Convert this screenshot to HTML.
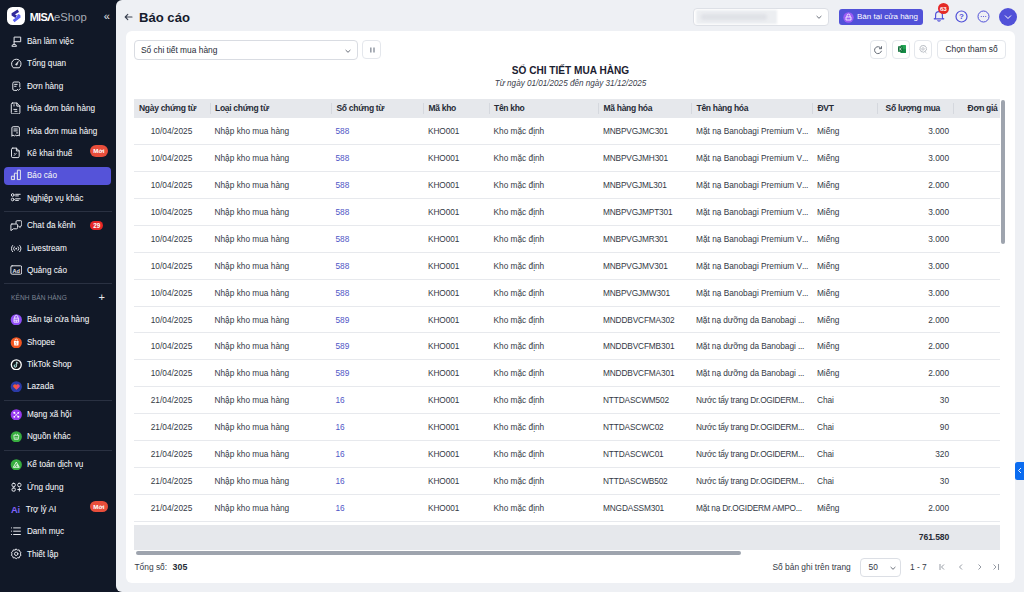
<!DOCTYPE html>
<html><head><meta charset="utf-8">
<style>
*{margin:0;padding:0;box-sizing:border-box}
html,body{width:1024px;height:592px;overflow:hidden;background:#111827;font-family:"Liberation Sans",sans-serif}
#side{position:absolute;left:0;top:0;width:116px;height:592px;background:#111827}
.logo{position:absolute;left:7.3px;top:7.1px;width:18.2px;height:18.4px;border-radius:5.5px;background:#fff}
.brand{position:absolute;left:29.8px;top:11px;font-size:11.3px;line-height:13px;color:#fff;white-space:nowrap}
.brand b{font-weight:bold;letter-spacing:-0.75px;font-size:10.9px}
.brand span{color:#a6abb5;margin-left:0.6px}
.collapse{position:absolute;left:103.8px;top:10px;color:#e6e8ee;font-size:11px}
.si{position:absolute;left:4.3px;width:107.1px;height:18px;border-radius:4px;color:#f3f4f7;font-size:8.2px;line-height:18px;-webkit-text-stroke:0.05px #f3f4f7;white-space:nowrap}
.si.act{background:#5553d9}
.si .ic{position:absolute;left:6px;top:2.6px;width:12px;height:12px}
.si .ic svg{display:block}
.si .lb{position:absolute;left:22.6px;top:0.5px}
.badge{position:absolute;left:85.5px;border-radius:6px;color:#fff;font-weight:bold;text-align:center}
.sep{position:absolute;left:4px;width:108px;height:1px;background:#2a3142}
.kenh{position:absolute;left:11px;top:294px;font-size:6.6px;color:#7d8494;letter-spacing:.1px}
.plus{position:absolute;left:98.5px;top:290.5px;font-size:11px;color:#e6e8ee}
#main{position:absolute;left:116px;top:0;width:908px;height:592px;background:#eef0f4;border-radius:6px 0 0 6px}
.title{position:absolute;left:139px;top:10px;font-size:13.1px;font-weight:bold;color:#151b2c}
.back{position:absolute;left:124px;top:13px}
.store{position:absolute;left:692.8px;top:7.5px;width:136.6px;height:18.5px;border:1px solid #dcdfe5;border-radius:4px;background:#fff}
.store .blur{position:absolute;left:2.5px;top:1.5px;width:81px;height:14px;background:#eceef1;filter:blur(0.8px)}
.store .blur2{position:absolute;left:7px;top:5.5px;width:66px;height:6px;border-radius:3px;background:#dfe1e6;filter:blur(1.6px)}
.btn-store{position:absolute;left:839px;top:9px;width:84px;height:16px;border-radius:3px;background:#5151d8;color:#fff;font-size:8px;line-height:15px}
#card{position:absolute;left:126px;top:31px;width:889px;height:552px;background:#fff;border-radius:6px}
.sel{position:absolute;left:134px;top:40px;width:224px;height:19.5px;border:1px solid #d9dce2;border-radius:4px;background:#fff;font-size:8.4px;line-height:19px;padding-left:6px;color:#262b36}
.ibtn{position:absolute;top:40px;height:18.5px;border:1px solid #e4e7ec;border-radius:4px;background:#fff}
.rtitle{position:absolute;left:0;width:1024px;text-align:center}
.thead{position:absolute;left:134px;top:99px;width:866px;height:18.7px;background:#e6e8ec}
.hsep{position:absolute;top:103px;width:1px;height:11px;background:#d5d8de}
.ht{position:absolute;top:102.6px;font-size:8.5px;letter-spacing:-0.3px;font-weight:bold;color:#262b36;white-space:nowrap}
.r{text-align:right}
.td{position:absolute;font-size:8.3px;line-height:12px;color:#343a46;white-space:nowrap}
.td.c{text-align:center}
.td.lk{color:#4f56c6}
.rl{position:absolute;left:134px;width:866px;height:1px;background:#e7e9ed}
.total{position:absolute;left:134px;top:525px;width:866px;height:24.6px;background:#e6e8ec}
.hscroll{position:absolute;left:135.5px;top:551px;width:605px;height:3.8px;border-radius:2px;background:#9ea4ae}
.vscroll{position:absolute;left:1000.8px;top:100px;width:4px;height:144px;border-radius:2px;background:#9ea4ae}
</style></head><body>
<div id="side">
<div class="logo"><svg width="18" height="18" viewBox="0 0 18 18"><path d="M11.3 3.8L5.3 7.4 9.2 9.8" stroke="#30299a" stroke-width="2.8" fill="none" stroke-linejoin="bevel"/><path d="M10.4 8.2L12.7 9.3 6.6 14.1" stroke="#5a60f3" stroke-width="2.8" fill="none" stroke-linejoin="bevel"/></svg></div>
<div class="brand"><b>MIS&#923;</b><span>eShop</span></div>
<div class="collapse">«</div>
<div class="si" style="top:32.5px"><span class="ic"><svg width="12" height="12" viewBox="0 0 12 12"><path d="M4.1 9.6V2.1h6.6v4.6H4.1" stroke="#e4e6ec" stroke-width="1" fill="none" stroke-linecap="round" stroke-linejoin="round"/><path d="M1.9 10.9a2.3 1.5 0 014.6 0z" stroke="#e4e6ec" stroke-width="1" fill="none" stroke-linecap="round" stroke-linejoin="round"/></svg></span><span class="lb">Bàn làm việc</span></div><div class="si" style="top:54.8px"><span class="ic"><svg width="12" height="12" viewBox="0 0 12 12"><path d="M3 10.5A4.8 4.8 0 119.6 10.5z" stroke="#e4e6ec" stroke-width="1" fill="none" stroke-linecap="round" stroke-linejoin="round"/><path d="M5.3 7.6L8.4 4.3 7 8.3z" fill="#e4e6ec" stroke="#e4e6ec" stroke-width=".5" stroke-linejoin="round"/></svg></span><span class="lb">Tổng quan</span></div><div class="si" style="top:77.4px"><span class="ic"><svg width="12" height="12" viewBox="0 0 12 12"><path d="M6.6 10.4H4.2a1.4 1.4 0 01-1.4-1.4V3.4A1.4 1.4 0 014.2 2h4.2a1.4 1.4 0 011.4 1.4V7" stroke="#e4e6ec" stroke-width="1" fill="none" stroke-linecap="round" stroke-linejoin="round"/><path d="M4.6 4.4h2.6M4.6 6.3h1.5M7.4 9.4l1 1 2-2" stroke="#e4e6ec" stroke-width="1" fill="none" stroke-linecap="round" stroke-linejoin="round"/></svg></span><span class="lb">Đơn hàng</span></div><div class="si" style="top:99.9px"><span class="ic"><svg width="12" height="12" viewBox="0 0 12 12"><path d="M2.6 1h4.2l3.1 3.1v6.5a1.3 1.3 0 01-1.3 1.3H2.6a1.3 1.3 0 01-1.3-1.3V2.3A1.3 1.3 0 012.6 1z" stroke="#e4e6ec" stroke-width="1" fill="none" stroke-linecap="round" stroke-linejoin="round"/><path d="M6.8 1v3.1h3.1M4 2.7v1.3M3.8 7.4h3M4.8 9.3h2.2" stroke="#e4e6ec" stroke-width="1" fill="none" stroke-linecap="round" stroke-linejoin="round"/></svg></span><span class="lb">Hóa đơn bán hàng</span></div><div class="si" style="top:122.2px"><span class="ic"><svg width="12" height="12" viewBox="0 0 12 12"><path d="M1.9 10.9V3a1.3 1.3 0 011.3-1.3h4.9A1.3 1.3 0 019.4 3v7.9l-1.25-.7-1.25.7-1.25-.7-1.25.7-1.25-.7z" stroke="#e4e6ec" stroke-width="1" fill="none" stroke-linecap="round" stroke-linejoin="round"/><path d="M3.9 4h3.4M3.9 5.9h3.4M6.6 7.9h.9" stroke="#e4e6ec" stroke-width="1" fill="none" stroke-linecap="round" stroke-linejoin="round"/></svg></span><span class="lb">Hóa đơn mua hàng</span></div><div class="si" style="top:144.5px"><span class="ic"><svg width="12" height="12" viewBox="0 0 12 12"><path d="M2.8 1.1h3.6l2.8 2.8v5.4a1.3 1.3 0 01-1.3 1.3H2.8a1.3 1.3 0 01-1.3-1.3V2.4a1.3 1.3 0 011.3-1.3z" stroke="#e4e6ec" stroke-width="1" fill="none" stroke-linecap="round" stroke-linejoin="round"/><path d="M6.4 1.1v2.8h2.8" stroke="#e4e6ec" stroke-width="1" fill="none" stroke-linecap="round" stroke-linejoin="round"/><path d="M4 8.6l2.4-2.4M4.3 6.4l.5.5" stroke="#e4e6ec" stroke-width=".8" stroke-linecap="round"/></svg></span><span class="lb">Kê khai thuế</span><span class="badge" style="top:0.9px;width:18.3px;height:11.2px;line-height:11.2px;background:#e94e3b;font-size:6.2px">Mới</span></div><div class="si act" style="top:166.9px"><span class="ic"><svg width="12" height="12" viewBox="0 0 12 12"><path d="M1.4 10.2V7.2h3v3zM4.4 10.2V4.2h3v6M7.4 10.2V1.2h3v9z" stroke="#e4e6ec" stroke-width="1" fill="none" stroke-linecap="round" stroke-linejoin="round"/></svg></span><span class="lb">Báo cáo</span></div><div class="si" style="top:189.1px"><span class="ic"><svg width="12" height="12" viewBox="0 0 12 12"><circle cx="2.7" cy="3" r="1.35" stroke="#e4e6ec" stroke-width="1" fill="none" stroke-linecap="round" stroke-linejoin="round"/><circle cx="2.7" cy="7.5" r="1.35" stroke="#e4e6ec" stroke-width="1" fill="none" stroke-linecap="round" stroke-linejoin="round"/><path d="M5.6 2.3h4.6M5.6 3.9h2.8M5.6 6.8h4.6M5.6 8.4h2.8" stroke="#e4e6ec" stroke-width="1" fill="none" stroke-linecap="round" stroke-linejoin="round"/></svg></span><span class="lb">Nghiệp vụ khác</span></div><div class="si" style="top:216.3px"><span class="ic"><svg width="12" height="12" viewBox="0 0 12 12"><path d="M6 4.3V2.8a1.1 1.1 0 011.1-1.1h3.6a1.1 1.1 0 011.1 1.1v3.3a1.1 1.1 0 01-1.1 1.1h-.5v1.3L8.6 7.2" stroke="#e4e6ec" stroke-width="1" fill="none" stroke-linecap="round" stroke-linejoin="round"/><path d="M1.9 5h4.6A1.1 1.1 0 017.6 6.1v2.6a1.1 1.1 0 01-1.1 1.1H3.4L.9 11.6V6A1 1 0 011.9 5z" stroke="#e4e6ec" stroke-width="1" fill="none" stroke-linecap="round" stroke-linejoin="round"/></svg></span><span class="lb">Chat đa kênh</span><span class="badge" style="top:4.3px;width:13.7px;height:9.5px;line-height:9.5px;background:#e62626;font-size:6.3px">29</span></div><div class="si" style="top:239.1px"><span class="ic"><svg width="12" height="12" viewBox="0 0 12 12"><circle cx="6.2" cy="6.6" r=".9" fill="#e4e6ec"/><path d="M4.3 4.8a2.6 2.6 0 000 3.6M8.1 4.8a2.6 2.6 0 010 3.6M2.6 3.5a4.5 4.5 0 000 6.2M9.8 3.5a4.5 4.5 0 010 6.2" stroke="#e4e6ec" stroke-width="1" fill="none" stroke-linecap="round" stroke-linejoin="round"/></svg></span><span class="lb">Livestream</span></div><div class="si" style="top:261.2px"><span class="ic"><svg width="12" height="12" viewBox="0 0 12 12"><rect x=".9" y="1.8" width="10.8" height="8.4" rx="1.2" stroke="#e4e6ec" stroke-width="1" fill="none" stroke-linecap="round" stroke-linejoin="round"/><text x="6.3" y="8.6" font-size="5.6" font-weight="bold" fill="#e4e6ec" text-anchor="middle" font-family="Liberation Sans">Ad</text></svg></span><span class="lb">Quảng cáo</span></div><div class="si" style="top:310.4px"><span class="ic"><svg width="12" height="12" viewBox="0 0 12 12"><circle cx="6.3" cy="6.8" r="5.6" fill="#8f4ef5"/><path d="M4 5.2h4.6v4H4zM4.7 5.2V4a1.6 1.6 0 013.2 0v1.2M4 7.2h4.6M6.3 7.2v2" stroke="#fff" stroke-width=".75" fill="none"/></svg></span><span class="lb">Bán tại cửa hàng</span></div><div class="si" style="top:333.2px"><span class="ic"><svg width="12" height="12" viewBox="0 0 12 12"><circle cx="6.3" cy="6.8" r="5.6" fill="#f2541f"/><path d="M3.9 4.9h4.8l-.3 4.6H4.2z" fill="#fff"/><path d="M5 4.9V4.3a1.3 1.3 0 012.6 0v.6" stroke="#fff" stroke-width=".7" fill="none"/><path d="M6.9 6.2a.8.6 0 00-1.3.4c0 .8 1.4.5 1.4 1.3a.8.6 0 01-1.4.3" stroke="#f2541f" stroke-width=".5" fill="none"/></svg></span><span class="lb">Shopee</span></div><div class="si" style="top:355.4px"><span class="ic"><svg width="12" height="12" viewBox="0 0 12 12"><circle cx="6.3" cy="6.8" r="5.6" fill="#fff"/><circle cx="6.3" cy="6.8" r="4.3" fill="#15171c"/><path d="M6.6 3.9v4.1a1.2 1.2 0 11-1.1-1.2M6.6 3.9c.2.8.8 1.3 1.6 1.4" stroke="#fff" stroke-width=".8" fill="none"/><path d="M6.2 3.7v4.1a1.2 1.2 0 11-1.1-1.2" stroke="#25f4ee" stroke-width=".4" fill="none" opacity=".7"/></svg></span><span class="lb">TikTok Shop</span></div><div class="si" style="top:377.6px"><span class="ic"><svg width="12" height="12" viewBox="0 0 12 12"><circle cx="6.3" cy="6.8" r="5.6" fill="#2b3aa6"/><path d="M6.3 9.8L3.4 7.1a1.6 1.6 0 012.9-2 1.6 1.6 0 012.9 2z" fill="#f25a3c"/><path d="M6.3 9.8L9.2 7.1a1.6 1.6 0 00-1.4-2.6" fill="#e83e8c"/></svg></span><span class="lb">Lazada</span></div><div class="si" style="top:405.4px"><span class="ic"><svg width="12" height="12" viewBox="0 0 12 12"><circle cx="6.3" cy="6.8" r="5.6" fill="#9739f0"/><path d="M4.3 4.8l4 4M8.3 4.8l-4 4" stroke="#fff" stroke-width=".6"/><circle cx="4.3" cy="4.8" r="1.05" fill="#fff"/><circle cx="8.3" cy="4.8" r=".9" fill="#fff"/><circle cx="4.3" cy="8.8" r=".9" fill="#fff"/><circle cx="8.3" cy="8.8" r="1.05" fill="#fff"/></svg></span><span class="lb">Mạng xã hội</span></div><div class="si" style="top:427.7px"><span class="ic"><svg width="12" height="12" viewBox="0 0 12 12"><circle cx="6.3" cy="6.8" r="5.6" fill="#37ad3f"/><path d="M3.8 5.3h5l-.5 4H4.3z" fill="none" stroke="#fff" stroke-width=".7"/><circle cx="5.2" cy="4.3" r=".5" fill="#fff"/><circle cx="7.4" cy="4.3" r=".5" fill="#fff"/><path d="M5.3 7.3v1.2M6.3 7.3v1.2M7.3 7.3v1.2" stroke="#fff" stroke-width=".5"/></svg></span><span class="lb">Nguồn khác</span></div><div class="si" style="top:455.4px"><span class="ic"><svg width="12" height="12" viewBox="0 0 12 12"><circle cx="6.3" cy="6.8" r="5.6" fill="#37ad3f"/><path d="M3.3 9.3L6.3 4l3 5.3zM4.6 9.3l2.6-2.9 1 2.9" fill="none" stroke="#fff" stroke-width=".8" stroke-linejoin="round"/></svg></span><span class="lb">Kế toán dịch vụ</span></div><div class="si" style="top:478.1px"><span class="ic"><svg width="12" height="12" viewBox="0 0 12 12"><rect x="2" y="2.3" width="3.3" height="3.3" rx="1.3" stroke="#e4e6ec" stroke-width="1" fill="none" stroke-linecap="round" stroke-linejoin="round"/><rect x="7.7" y="2.3" width="3.3" height="3.3" rx="1.3" stroke="#e4e6ec" stroke-width="1" fill="none" stroke-linecap="round" stroke-linejoin="round"/><rect x="2" y="6.9" width="3.3" height="3.3" rx="1.3" stroke="#e4e6ec" stroke-width="1" fill="none" stroke-linecap="round" stroke-linejoin="round"/><path d="M9.35 6.9v3.2M7.75 8.5h3.2" stroke="#e4e6ec" stroke-width="1" fill="none" stroke-linecap="round" stroke-linejoin="round"/></svg></span><span class="lb">Ứng dụng</span></div><div class="si" style="top:500.1px"><span class="ic"><svg width="12" height="12" viewBox="0 0 12 12"><defs><linearGradient id="aig" x1="0" y1="0" x2="1" y2="1"><stop offset="0" stop-color="#a259ff"/><stop offset="1" stop-color="#5b6cf5"/></linearGradient></defs><text x="1" y="10" font-size="9.4" font-weight="bold" fill="url(#aig)" font-family="Liberation Sans" letter-spacing="-.2">Ai</text></svg></span><span class="lb" style="left:21.4px">Trợ lý AI</span><span class="badge" style="top:0.9px;width:18.3px;height:11.2px;line-height:11.2px;background:#e94e3b;font-size:6.2px">Mới</span></div><div class="si" style="top:522.7px"><span class="ic"><svg width="12" height="12" viewBox="0 0 12 12"><path d="M1.5 2.9h.1M1.5 6.2h.1M1.5 9.5h.1M3.6 2.9h6.8M3.6 6.2h6.8M3.6 9.5h6.8" stroke="#e4e6ec" stroke-width="1" fill="none" stroke-linecap="round" stroke-linejoin="round" stroke-width="1.1"/></svg></span><span class="lb">Danh mục</span></div><div class="si" style="top:545.0px"><span class="ic"><svg width="12" height="12" viewBox="0 0 12 12"><circle cx="6.2" cy="5.8" r="1.7" stroke="#e4e6ec" stroke-width="1" fill="none" stroke-linecap="round" stroke-linejoin="round"/><path d="M6.2 1.1l1.3 1 1.7-.2.4 1.6 1.4.9-.6 1.5.6 1.5-1.4.9-.4 1.6-1.7-.2-1.3 1-1.3-1-1.7.2-.4-1.6L1.4 7.4 2 5.9 1.4 4.4l1.4-.9.4-1.6 1.7.2z" stroke="#e4e6ec" stroke-width="1" fill="none" stroke-linecap="round" stroke-linejoin="round"/></svg></span><span class="lb">Thiết lập</span></div><div class="sep" style="top:211.0px"></div><div class="sep" style="top:282.6px"></div><div class="sep" style="top:400.0px"></div><div class="sep" style="top:450.0px"></div>
<div class="kenh">KÊNH BÁN HÀNG</div>
<div class="plus">+</div>
</div>
<div id="main"></div>
<svg class="back" width="9" height="8" viewBox="0 0 9 8"><path d="M8 4H1.2M3.8 1.4L1.2 4l2.6 2.6" stroke="#3a4050" stroke-width="1.1" fill="none" stroke-linecap="round" stroke-linejoin="round"/></svg>
<div class="title">Báo cáo</div>
<div class="store"><div class="blur"></div><div class="blur2"></div><svg style="position:absolute;left:121px;top:5.5px" width="8" height="6" viewBox="0 0 8 6"><path d="M1.6 2l2.4 2.3L6.4 2" stroke="#5a606b" stroke-width=".9" fill="none"/></svg></div>
<div class="btn-store"><svg style="position:absolute;left:4px;top:2.5px" width="11" height="11" viewBox="0 0 11 11"><circle cx="5.5" cy="5.5" r="5.2" fill="#9b5cf5"/><path d="M3 8V5h5v3zM4 5V3.6a1.5 1.5 0 013 0V5" stroke="#fff" stroke-width=".8" fill="none"/></svg><span style="position:absolute;left:18px;top:0">Bán tại cửa hàng</span></div>
<svg style="position:absolute;left:931.5px;top:8.3px" width="14" height="14" viewBox="0 0 14 14"><path d="M3.6 9.5V7a3.4 3.4 0 016.8 0v2.5c0 .6.6 1.2 1.4 1.3H2.2c.8-.1 1.4-.7 1.4-1.3z M5.8 12a1.2 1.2 0 002.4 0" stroke="#4f4fd8" stroke-width="1.15" fill="none" stroke-linejoin="round"/></svg>
<div style="position:absolute;left:937.7px;top:2.9px;width:11px;height:11px;border-radius:5.5px;background:#e42a26;color:#fff;font-size:6.2px;font-weight:bold;text-align:center;line-height:11px;letter-spacing:-.2px">63</div>
<svg style="position:absolute;left:955px;top:10px" width="13" height="13" viewBox="0 0 13 13"><circle cx="6.5" cy="6.5" r="5.5" stroke="#4f4fd8" stroke-width="1.2" fill="none"/><text x="6.5" y="9.3" font-size="8" font-weight="bold" text-anchor="middle" fill="#4f4fd8" font-family="Liberation Sans">?</text></svg>
<svg style="position:absolute;left:977px;top:10px" width="13" height="13" viewBox="0 0 13 13"><circle cx="6.5" cy="6.5" r="5.5" stroke="#4f4fd8" stroke-width="1" fill="none"/><circle cx="4.3" cy="6.5" r=".6" fill="#4f4fd8"/><circle cx="6.5" cy="6.5" r=".6" fill="#4f4fd8"/><circle cx="8.7" cy="6.5" r=".6" fill="#4f4fd8"/></svg>
<div style="position:absolute;left:999px;top:7.5px;width:18px;height:18px;border-radius:9px;background:#5151d8"><svg style="position:absolute;left:5px;top:6px" width="8" height="6" viewBox="0 0 8 6"><path d="M1 1.5l3 3 3-3" stroke="#fff" stroke-width="1" fill="none"/></svg></div>
<div style="position:absolute;left:1015px;top:462px;width:9px;height:17.5px;border-radius:2.5px 0 0 2.5px;background:#0b6cf0"><svg style="position:absolute;left:2px;top:5px" width="5" height="7" viewBox="0 0 5 7"><path d="M4 1L1.5 3.5 4 6" stroke="#fff" stroke-width=".9" fill="none"/></svg></div>
<div id="card"></div>
<div class="sel">Sổ chi tiết mua hàng<svg style="position:absolute;left:209px;top:6.5px" width="8" height="6" viewBox="0 0 8 6"><path d="M1.6 2l2.4 2.3L6.4 2" stroke="#5a606b" stroke-width=".9" fill="none"/></svg></div>
<div class="ibtn" style="left:362px;width:19px"><svg style="position:absolute;left:5.5px;top:4.5px" width="7" height="8" viewBox="0 0 7 8"><rect x="1" y="1.5" width="1.6" height="5" fill="#9aa0aa"/><rect x="4.2" y="1.5" width="1.6" height="5" fill="#9aa0aa"/></svg></div>
<div class="ibtn" style="left:869.8px;width:17.5px"><svg style="position:absolute;left:2.5px;top:3.8px" width="10" height="10" viewBox="0 0 10 10"><path d="M8.1 3.4A3.5 3.5 0 1 0 8.4 6.2" stroke="#5f6571" stroke-width=".95" fill="none" stroke-linecap="round"/><path d="M8.5 1.6v2.1H6.4" stroke="#5f6571" stroke-width=".95" fill="none" stroke-linecap="round" stroke-linejoin="round"/></svg></div>
<div class="ibtn" style="left:892px;width:17.5px"><svg style="position:absolute;left:3.5px;top:3.3px" width="10" height="10" viewBox="0 0 10 10"><rect x="3.6" y="1" width="5.4" height="7.9" rx=".5" fill="#22a454"/><rect x="3.6" y="4.9" width="5.4" height="4" fill="#158a45"/><rect x="1" y="2.3" width="4.6" height="5.4" rx=".5" fill="#0f6e37"/><path d="M2.2 3.5l2.2 3M4.4 3.5l-2.2 3" stroke="#e8f5ec" stroke-width=".7"/></svg></div>
<div class="ibtn" style="left:914px;width:17.5px"><svg style="position:absolute;left:3.2px;top:3.3px" width="10" height="10" viewBox="0 0 10 10"><path d="M5 1.1l.9.8 1.2-.1.4 1.1 1 .7-.3 1.1.4 1.1-1 .6-.3 1.2-1.2.1-.9.8-.9-.8-1.2-.1-.3-1.2-1-.6.4-1.1-.3-1.1 1-.7.4-1.1 1.2.1z" stroke="#a9aeb6" stroke-width=".8" fill="none" stroke-linejoin="round"/><rect x="3.9" y="3.9" width="2.2" height="2" rx=".4" stroke="#a9aeb6" stroke-width=".7" fill="none"/><path d="M7.6 8.4l.9.9" stroke="#a9aeb6" stroke-width=".8"/></svg></div>
<div class="ibtn" style="left:937px;width:69px;font-size:8.4px;line-height:16.5px;text-align:center;color:#262b36">Chọn tham số</div>
<div class="rtitle" style="left:126px;width:889px;top:65px;font-size:10.1px;font-weight:bold;color:#1b2130">SỔ CHI TIẾT MUA HÀNG</div>
<div class="rtitle" style="left:126px;width:889px;top:79px;font-size:8.15px;font-style:italic;color:#3a404c">Từ ngày 01/01/2025 đến ngày 31/12/2025</div>
<div class="thead"></div>
<div class="ht" style="left:139.0px">Ngày chứng từ</div><div class="hsep" style="left:209.5px"></div><div class="ht" style="left:215.0px">Loại chứng từ</div><div class="hsep" style="left:331.0px"></div><div class="ht" style="left:336.5px">Số chứng từ</div><div class="hsep" style="left:423.0px"></div><div class="ht" style="left:428.5px">Mã kho</div><div class="hsep" style="left:488.5px"></div><div class="ht" style="left:494.0px">Tên kho</div><div class="hsep" style="left:598.0px"></div><div class="ht" style="left:603.5px">Mã hàng hóa</div><div class="hsep" style="left:691.0px"></div><div class="ht" style="left:696.5px">Tên hàng hóa</div><div class="hsep" style="left:812.0px"></div><div class="ht" style="left:817.5px">ĐVT</div><div class="hsep" style="left:876.5px"></div><div class="ht r" style="right:84.0px">Số lượng mua</div><div class="hsep" style="left:952.5px"></div><div class="ht r" style="right:26.5px">Đơn giá</div>
<div class="rl" style="top:144.10px"></div><div class="td c" style="top:125.25px;left:133.5px;width:76px">10/04/2025</div><div class="td" style="top:125.25px;left:214.5px">Nhập kho mua hàng</div><div class="td lk" style="top:125.25px;left:335.5px">588</div><div class="td" style="top:125.25px;left:428px;letter-spacing:-0.1px">KHO001</div><div class="td" style="top:125.25px;left:493.5px">Kho mặc định</div><div class="td" style="top:125.25px;left:603px;letter-spacing:-0.15px">MNBPVGJMC301</div><div class="td" style="top:125.25px;left:696px;letter-spacing:0px">Mặt nạ Banobagi Premium V<span style="letter-spacing:-0.3px">...</span></div><div class="td" style="top:125.25px;left:816.9px">Miếng</div><div class="td r" style="top:125.25px;right:75.0px">3.000</div><div class="rl" style="top:171.00px"></div><div class="td c" style="top:152.15px;left:133.5px;width:76px">10/04/2025</div><div class="td" style="top:152.15px;left:214.5px">Nhập kho mua hàng</div><div class="td lk" style="top:152.15px;left:335.5px">588</div><div class="td" style="top:152.15px;left:428px;letter-spacing:-0.1px">KHO001</div><div class="td" style="top:152.15px;left:493.5px">Kho mặc định</div><div class="td" style="top:152.15px;left:603px;letter-spacing:-0.15px">MNBPVGJMH301</div><div class="td" style="top:152.15px;left:696px;letter-spacing:0px">Mặt nạ Banobagi Premium V<span style="letter-spacing:-0.3px">...</span></div><div class="td" style="top:152.15px;left:816.9px">Miếng</div><div class="td r" style="top:152.15px;right:75.0px">3.000</div><div class="rl" style="top:197.90px"></div><div class="td c" style="top:179.05px;left:133.5px;width:76px">10/04/2025</div><div class="td" style="top:179.05px;left:214.5px">Nhập kho mua hàng</div><div class="td lk" style="top:179.05px;left:335.5px">588</div><div class="td" style="top:179.05px;left:428px;letter-spacing:-0.1px">KHO001</div><div class="td" style="top:179.05px;left:493.5px">Kho mặc định</div><div class="td" style="top:179.05px;left:603px;letter-spacing:-0.15px">MNBPVGJML301</div><div class="td" style="top:179.05px;left:696px;letter-spacing:0px">Mặt nạ Banobagi Premium V<span style="letter-spacing:-0.3px">...</span></div><div class="td" style="top:179.05px;left:816.9px">Miếng</div><div class="td r" style="top:179.05px;right:75.0px">2.000</div><div class="rl" style="top:224.80px"></div><div class="td c" style="top:205.95px;left:133.5px;width:76px">10/04/2025</div><div class="td" style="top:205.95px;left:214.5px">Nhập kho mua hàng</div><div class="td lk" style="top:205.95px;left:335.5px">588</div><div class="td" style="top:205.95px;left:428px;letter-spacing:-0.1px">KHO001</div><div class="td" style="top:205.95px;left:493.5px">Kho mặc định</div><div class="td" style="top:205.95px;left:603px;letter-spacing:-0.15px">MNBPVGJMPT301</div><div class="td" style="top:205.95px;left:696px;letter-spacing:0px">Mặt nạ Banobagi Premium V<span style="letter-spacing:-0.3px">...</span></div><div class="td" style="top:205.95px;left:816.9px">Miếng</div><div class="td r" style="top:205.95px;right:75.0px">3.000</div><div class="rl" style="top:251.70px"></div><div class="td c" style="top:232.85px;left:133.5px;width:76px">10/04/2025</div><div class="td" style="top:232.85px;left:214.5px">Nhập kho mua hàng</div><div class="td lk" style="top:232.85px;left:335.5px">588</div><div class="td" style="top:232.85px;left:428px;letter-spacing:-0.1px">KHO001</div><div class="td" style="top:232.85px;left:493.5px">Kho mặc định</div><div class="td" style="top:232.85px;left:603px;letter-spacing:-0.15px">MNBPVGJMR301</div><div class="td" style="top:232.85px;left:696px;letter-spacing:0px">Mặt nạ Banobagi Premium V<span style="letter-spacing:-0.3px">...</span></div><div class="td" style="top:232.85px;left:816.9px">Miếng</div><div class="td r" style="top:232.85px;right:75.0px">3.000</div><div class="rl" style="top:278.60px"></div><div class="td c" style="top:259.75px;left:133.5px;width:76px">10/04/2025</div><div class="td" style="top:259.75px;left:214.5px">Nhập kho mua hàng</div><div class="td lk" style="top:259.75px;left:335.5px">588</div><div class="td" style="top:259.75px;left:428px;letter-spacing:-0.1px">KHO001</div><div class="td" style="top:259.75px;left:493.5px">Kho mặc định</div><div class="td" style="top:259.75px;left:603px;letter-spacing:-0.15px">MNBPVGJMV301</div><div class="td" style="top:259.75px;left:696px;letter-spacing:0px">Mặt nạ Banobagi Premium V<span style="letter-spacing:-0.3px">...</span></div><div class="td" style="top:259.75px;left:816.9px">Miếng</div><div class="td r" style="top:259.75px;right:75.0px">3.000</div><div class="rl" style="top:305.50px"></div><div class="td c" style="top:286.65px;left:133.5px;width:76px">10/04/2025</div><div class="td" style="top:286.65px;left:214.5px">Nhập kho mua hàng</div><div class="td lk" style="top:286.65px;left:335.5px">588</div><div class="td" style="top:286.65px;left:428px;letter-spacing:-0.1px">KHO001</div><div class="td" style="top:286.65px;left:493.5px">Kho mặc định</div><div class="td" style="top:286.65px;left:603px;letter-spacing:-0.15px">MNBPVGJMW301</div><div class="td" style="top:286.65px;left:696px;letter-spacing:0px">Mặt nạ Banobagi Premium V<span style="letter-spacing:-0.3px">...</span></div><div class="td" style="top:286.65px;left:816.9px">Miếng</div><div class="td r" style="top:286.65px;right:75.0px">3.000</div><div class="rl" style="top:332.40px"></div><div class="td c" style="top:313.55px;left:133.5px;width:76px">10/04/2025</div><div class="td" style="top:313.55px;left:214.5px">Nhập kho mua hàng</div><div class="td lk" style="top:313.55px;left:335.5px">589</div><div class="td" style="top:313.55px;left:428px;letter-spacing:-0.1px">KHO001</div><div class="td" style="top:313.55px;left:493.5px">Kho mặc định</div><div class="td" style="top:313.55px;left:603px;letter-spacing:-0.15px">MNDDBVCFMA302</div><div class="td" style="top:313.55px;left:696px;letter-spacing:-0.07px">Mặt nạ dưỡng da Banobagi <span style="letter-spacing:-0.3px">...</span></div><div class="td" style="top:313.55px;left:816.9px">Miếng</div><div class="td r" style="top:313.55px;right:75.0px">2.000</div><div class="rl" style="top:359.30px"></div><div class="td c" style="top:340.45px;left:133.5px;width:76px">10/04/2025</div><div class="td" style="top:340.45px;left:214.5px">Nhập kho mua hàng</div><div class="td lk" style="top:340.45px;left:335.5px">589</div><div class="td" style="top:340.45px;left:428px;letter-spacing:-0.1px">KHO001</div><div class="td" style="top:340.45px;left:493.5px">Kho mặc định</div><div class="td" style="top:340.45px;left:603px;letter-spacing:-0.15px">MNDDBVCFMB301</div><div class="td" style="top:340.45px;left:696px;letter-spacing:-0.07px">Mặt nạ dưỡng da Banobagi <span style="letter-spacing:-0.3px">...</span></div><div class="td" style="top:340.45px;left:816.9px">Miếng</div><div class="td r" style="top:340.45px;right:75.0px">2.000</div><div class="rl" style="top:386.20px"></div><div class="td c" style="top:367.35px;left:133.5px;width:76px">10/04/2025</div><div class="td" style="top:367.35px;left:214.5px">Nhập kho mua hàng</div><div class="td lk" style="top:367.35px;left:335.5px">589</div><div class="td" style="top:367.35px;left:428px;letter-spacing:-0.1px">KHO001</div><div class="td" style="top:367.35px;left:493.5px">Kho mặc định</div><div class="td" style="top:367.35px;left:603px;letter-spacing:-0.15px">MNDDBVCFMA301</div><div class="td" style="top:367.35px;left:696px;letter-spacing:-0.07px">Mặt nạ dưỡng da Banobagi <span style="letter-spacing:-0.3px">...</span></div><div class="td" style="top:367.35px;left:816.9px">Miếng</div><div class="td r" style="top:367.35px;right:75.0px">2.000</div><div class="rl" style="top:413.10px"></div><div class="td c" style="top:394.25px;left:133.5px;width:76px">21/04/2025</div><div class="td" style="top:394.25px;left:214.5px">Nhập kho mua hàng</div><div class="td lk" style="top:394.25px;left:335.5px">16</div><div class="td" style="top:394.25px;left:428px;letter-spacing:-0.1px">KHO001</div><div class="td" style="top:394.25px;left:493.5px">Kho mặc định</div><div class="td" style="top:394.25px;left:603px;letter-spacing:-0.15px">NTTDASCWM502</div><div class="td" style="top:394.25px;left:696px;letter-spacing:-0.25px">Nước tẩy trang Dr.OGIDERM<span style="letter-spacing:-0.3px">...</span></div><div class="td" style="top:394.25px;left:816.9px">Chai</div><div class="td r" style="top:394.25px;right:75.0px">30</div><div class="rl" style="top:440.00px"></div><div class="td c" style="top:421.15px;left:133.5px;width:76px">21/04/2025</div><div class="td" style="top:421.15px;left:214.5px">Nhập kho mua hàng</div><div class="td lk" style="top:421.15px;left:335.5px">16</div><div class="td" style="top:421.15px;left:428px;letter-spacing:-0.1px">KHO001</div><div class="td" style="top:421.15px;left:493.5px">Kho mặc định</div><div class="td" style="top:421.15px;left:603px;letter-spacing:-0.15px">NTTDASCWC02</div><div class="td" style="top:421.15px;left:696px;letter-spacing:-0.25px">Nước tẩy trang Dr.OGIDERM<span style="letter-spacing:-0.3px">...</span></div><div class="td" style="top:421.15px;left:816.9px">Chai</div><div class="td r" style="top:421.15px;right:75.0px">90</div><div class="rl" style="top:466.90px"></div><div class="td c" style="top:448.05px;left:133.5px;width:76px">21/04/2025</div><div class="td" style="top:448.05px;left:214.5px">Nhập kho mua hàng</div><div class="td lk" style="top:448.05px;left:335.5px">16</div><div class="td" style="top:448.05px;left:428px;letter-spacing:-0.1px">KHO001</div><div class="td" style="top:448.05px;left:493.5px">Kho mặc định</div><div class="td" style="top:448.05px;left:603px;letter-spacing:-0.15px">NTTDASCWC01</div><div class="td" style="top:448.05px;left:696px;letter-spacing:-0.25px">Nước tẩy trang Dr.OGIDERM<span style="letter-spacing:-0.3px">...</span></div><div class="td" style="top:448.05px;left:816.9px">Chai</div><div class="td r" style="top:448.05px;right:75.0px">320</div><div class="rl" style="top:493.80px"></div><div class="td c" style="top:474.95px;left:133.5px;width:76px">21/04/2025</div><div class="td" style="top:474.95px;left:214.5px">Nhập kho mua hàng</div><div class="td lk" style="top:474.95px;left:335.5px">16</div><div class="td" style="top:474.95px;left:428px;letter-spacing:-0.1px">KHO001</div><div class="td" style="top:474.95px;left:493.5px">Kho mặc định</div><div class="td" style="top:474.95px;left:603px;letter-spacing:-0.15px">NTTDASCWB502</div><div class="td" style="top:474.95px;left:696px;letter-spacing:-0.25px">Nước tẩy trang Dr.OGIDERM<span style="letter-spacing:-0.3px">...</span></div><div class="td" style="top:474.95px;left:816.9px">Chai</div><div class="td r" style="top:474.95px;right:75.0px">30</div><div class="rl" style="top:520.70px"></div><div class="td c" style="top:501.85px;left:133.5px;width:76px">21/04/2025</div><div class="td" style="top:501.85px;left:214.5px">Nhập kho mua hàng</div><div class="td lk" style="top:501.85px;left:335.5px">16</div><div class="td" style="top:501.85px;left:428px;letter-spacing:-0.1px">KHO001</div><div class="td" style="top:501.85px;left:493.5px">Kho mặc định</div><div class="td" style="top:501.85px;left:603px;letter-spacing:-0.15px">MNGDASSM301</div><div class="td" style="top:501.85px;left:696px;letter-spacing:-0.2px">Mặt nạ Dr.OGIDERM AMPO<span style="letter-spacing:-0.3px">...</span></div><div class="td" style="top:501.85px;left:816.9px">Miếng</div><div class="td r" style="top:501.85px;right:75.0px">2.000</div>
<div class="total"></div>
<div class="ht r" style="top:531.5px;right:74.79999999999995px;font-size:8.6px;letter-spacing:-0.1px">761.580</div>
<div class="hscroll"></div>
<div class="vscroll"></div>
<div style="position:absolute;left:134.5px;top:562px;font-size:8.4px;color:#343a46">Tổng số:</div>
<div style="position:absolute;left:172.5px;top:562px;font-size:8.8px;font-weight:bold;color:#262b36;letter-spacing:.15px">305</div>
<div style="position:absolute;left:772.5px;top:562px;font-size:8.4px;color:#343a46">Số bản ghi trên trang</div>
<div style="position:absolute;left:859.5px;top:558px;width:41.5px;height:18.5px;border:1px solid #dcdfe5;border-radius:4px;background:#fff;font-size:8.4px;line-height:16.5px;padding-left:8px;color:#343a46">50<svg style="position:absolute;left:28px;top:6px" width="8" height="6" viewBox="0 0 8 6"><path d="M1.6 2l2.4 2.3L6.4 2" stroke="#5a606b" stroke-width=".9" fill="none"/></svg></div>
<div style="position:absolute;left:910px;top:562px;font-size:8.4px;color:#343a46">1 - 7</div>
<svg style="position:absolute;left:937px;top:563px" width="64" height="8" viewBox="0 0 64 8"><path d="M3 1v6M7 1.5L4.5 4 7 6.5M25 1.5L22.5 4 25 6.5M41.5 1.5L44 4 41.5 6.5M56.5 1.5L59 4 56.5 6.5M61.5 1v6" stroke="#8a909a" stroke-width=".9" fill="none"/></svg>
</body></html>
